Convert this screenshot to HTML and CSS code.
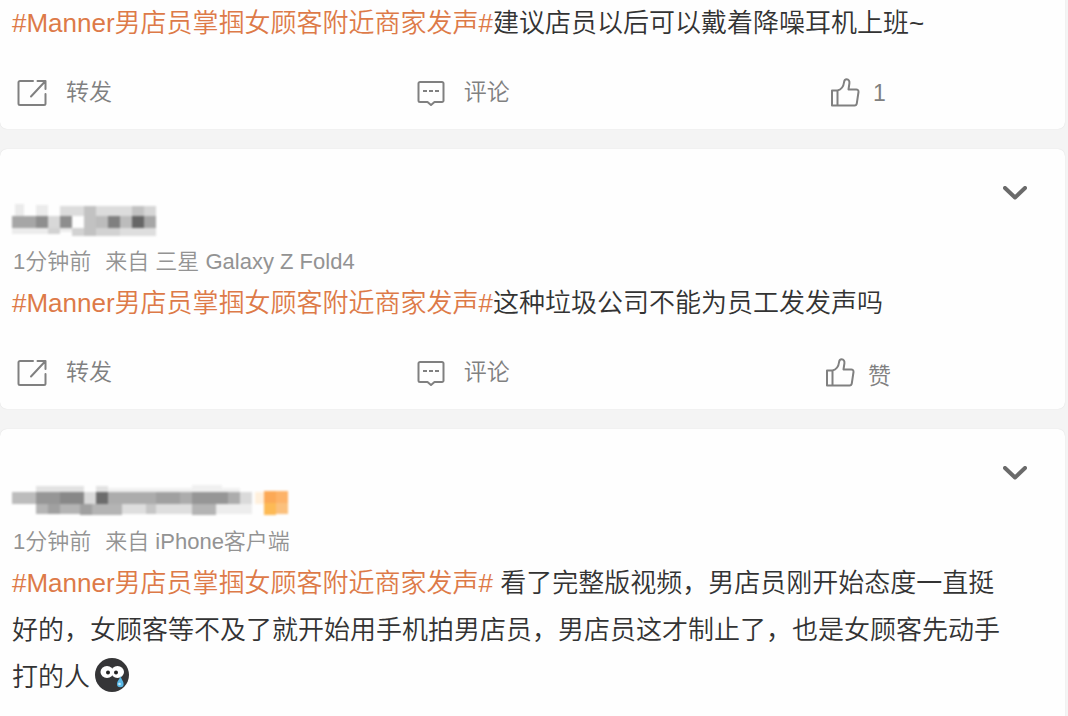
FILE: index.html
```html
<!DOCTYPE html>
<html lang="zh-CN">
<head>
    <meta charset="UTF-8">
    <meta name="viewport" content="width=device-width, initial-scale=1.0">
    <title>微博</title>
    <link rel="stylesheet" href="styles.css">
</head>
<body>
    <!-- shared icons -->
    <svg class="sprite" aria-hidden="true">
        <symbol id="icon-share" viewBox="0 0 30 28">
            <path d="M16 3H3a1.500 1.500 0 0 0-1.500 1.500v21A1.500 1.500 0 0 0 3 27h24a1.500 1.500 0 0 0 1.500-1.500V16M14 18.500 28 3.500M20.500 3h8v8"/>
        </symbol>
        <symbol id="icon-comment" viewBox="0 0 28 28">
            <path d="M3 4h22a1.500 1.500 0 0 1 1.500 1.500v17A1.500 1.500 0 0 1 25 24h-7.500L14 27l-3.500-3H3a1.500 1.500 0 0 1-1.500-1.500v-17A1.500 1.500 0 0 1 3 4z"/>
            <path stroke-linecap="butt" d="M6 13h4M12 13h4M18 13h4"/>
        </symbol>
        <symbol id="icon-like" viewBox="0 0 30 30">
            <path d="M2 13.500h5.500v15H2zM7.500 13.500c4-1 6-4 6.500-8 .2-2 1.200-3.200 2.700-3.200 2 0 3 1.700 2.700 4L18.500 12.500h7.700c1.500 0 2.500 1 2.300 2.500l-1.700 11.300c-.2 1.400-1 2.200-2.300 2.200h-17"/>
        </symbol>
        <symbol id="icon-down" viewBox="0 0 24 14">
            <path d="m2 2 10 9.500L22 2"/>
        </symbol>
    </svg>

    <main class="feed">
        <article class="card">
            <p class="text"><a class="topic" href="#">#Manner男店员掌掴女顾客附近商家发声#</a>建议店员以后可以戴着降噪耳机上班~</p>
            <div class="actions">
                <button class="action share" type="button"><svg class="icon"><use href="#icon-share"/></svg><span>转发</span></button>
                <button class="action comment" type="button"><svg class="icon"><use href="#icon-comment"/></svg><span>评论</span></button>
                <button class="action like" type="button" aria-label="赞 1"><svg class="icon"><use href="#icon-like"/></svg><span>1</span></button>
            </div>
        </article>

        <article class="card">
            <header class="head">
                <svg class="name" width="145" height="32" aria-hidden="true">
                    <path fill="#ebebeb" d="M3 0h9v12H3zM24 1h12v11H24z"/>
                    <path fill="#dcdcdc" d="M48 2h24v10H48zM84 2h24v10H84zM108 2h12v10h-12z"/>
                    <path fill="#c2c2c2" d="M72 2h12v30H72zM120 2h12v10h-12z"/>
                    <path fill="#d6d6d6" d="M132 2h12v10h-12z"/>
                    <path fill="#a6a6a6" d="M0 12h24v12H0zM132 12h12v12h-12z"/>
                    <path fill="#8e8e8e" d="M24 12h12v12H24zM48 12h12v12H48z"/>
                    <path fill="#d8d8d8" d="M36 12h12v12H36z"/>
                    <path fill="#bcbcbc" d="M84 12h12v12H84zM108 12h12v12h-12z"/>
                    <path fill="#808080" d="M96 12h12v12H96z"/>
                    <path fill="#666" d="M120 12h12v12h-12z"/>
                    <path fill="#ececec" d="M0 24h36v6H0zM48 24h12v4H48z"/>
                    <path fill="#d2d2d2" d="M36 24h12v6H36zM60 24h12v8H60zM84 24h24v8H84z"/>
                    <path fill="#dedede" d="M108 24h36v8h-36z"/>
                </svg>
                <button class="more" type="button" aria-label="更多"><svg><use href="#icon-down"/></svg></button>
            </header>
            <p class="meta"><span>1分钟前</span><span>来自 三星 Galaxy Z Fold4</span></p>
            <p class="text"><a class="topic" href="#">#Manner男店员掌掴女顾客附近商家发声#</a>这种垃圾公司不能为员工发发声吗</p>
            <div class="actions">
                <button class="action share" type="button"><svg class="icon"><use href="#icon-share"/></svg><span>转发</span></button>
                <button class="action comment" type="button"><svg class="icon"><use href="#icon-comment"/></svg><span>评论</span></button>
                <button class="action like" type="button"><svg class="icon"><use href="#icon-like"/></svg><span>赞</span></button>
            </div>
        </article>

        <article class="card">
            <header class="head">
                <svg class="name" width="280" height="32" aria-hidden="true">
                    <path fill="#e2e2e2" d="M24 2h48v6H24zM84 2h12v6H84z"/>
                    <path fill="#f0f0f0" d="M96 4h84v4H96zM180 1h30v7h-30zM210 4h18v4h-18z"/>
                    <path fill="#bcbcbc" d="M0 8h24v12H0z"/>
                    <path fill="#969696" d="M24 8h24v12H24zM180 8h36v12h-36z"/>
                    <path fill="#888" d="M48 8h24v12H48z"/>
                    <path fill="#dadada" d="M72 8h12v12H72zM228 8h12v12h-12z"/>
                    <path fill="#6c6c6c" d="M84 8h12v12H84z"/>
                    <path fill="#acacac" d="M96 8h48v12H96zM168 8h12v12h-12zM216 8h12v12h-12z"/>
                    <path fill="#a0a0a0" d="M144 8h24v12h-24z"/>
                    <path fill="#b4b4b4" d="M24 20h12v10H24zM48 20h20v10H48zM80 20h30v11H80zM180 20h24v11h-24z"/>
                    <path fill="#a0a0a0" d="M36 20h12v10H36zM68 20h12v11H68z"/>
                    <path fill="#dedede" d="M110 20h24v10h-24zM144 20h36v10h-36z"/>
                    <path fill="#c6c6c6" d="M134 20h10v10h-10z"/>
                    <path fill="#ededed" d="M204 20h36v10h-36z"/>
                    <path fill="#fff0dc" d="M243 8h9v12h-9z"/>
                    <path fill="#fca956" d="M252 7h12v12h-12z"/>
                    <path fill="#fdb368" d="M264 7h12v12h-12z"/>
                    <path fill="#fdba55" d="M252 19h12v12h-12z"/>
                    <path fill="#fbc07c" d="M264 19h12v11h-12z"/>
                </svg>
                <button class="more" type="button" aria-label="更多"><svg><use href="#icon-down"/></svg></button>
            </header>
            <p class="meta"><span>1分钟前</span><span>来自 iPhone客户端</span></p>
            <p class="text"><a class="topic" href="#">#Manner男店员掌掴女顾客附近商家发声#</a> 看了完整版视频，男店员刚开始态度一直挺好的，女顾客等不及了就开始用手机拍男店员，男店员这才制止了，也是女顾客先动手打的人<svg class="emoji" viewBox="0 0 34 34" role="img" aria-label="悲伤">
                <circle cx="17" cy="17" r="17" fill="#353537"/>
                <ellipse cx="12" cy="14" rx="6.500" ry="6" fill="#fff"/>
                <ellipse cx="22.500" cy="14" rx="6.500" ry="6" fill="#fff"/>
                <circle cx="13" cy="14.500" r="2" fill="#222"/>
                <circle cx="21" cy="14.500" r="2" fill="#222"/>
                <path d="M25.500 18c-1 3.500-3.500 5-3.500 8a3.300 3.300 0 0 0 6.600 0c0-3-2.300-4.500-3.100-8z" fill="#58b7e6"/>
                <circle cx="24.500" cy="26" r="1.300" fill="#c9ecfb"/>
            </svg></p>
        </article>
    </main>
</body>
</html>
```
FILE: styles.css
```css
body {
    margin: 0;
    background-color: #f4f4f4;
    font-family: "Liberation Sans", "Noto Sans CJK SC", sans-serif;
    font-weight: 350;
    color: #333;
}
.sprite {
    display: none;
}
.feed {
    display: flex;
    flex-direction: column;
    gap: 20px;
    margin-right: 3px;
}
.card {
    background-color: #fefefe;
    border-radius: 7px;
    box-shadow: 0 0 1px rgba(0, 0, 0, 0.15);
}
.card:first-child {
    border-top-left-radius: 0;
    border-top-right-radius: 0;
}
.card:last-child {
    padding-bottom: 40px;
}
.head {
    display: flex;
    justify-content: space-between;
    align-items: flex-start;
    padding: 31px 38px 8px 12px;
}
.name {
    margin-top: 24px;
    shape-rendering: crispEdges;
    filter: blur(1px);
}
.more {
    padding: 6px 0;
    border: none;
    background: none;
    cursor: pointer;
}
.more svg {
    display: block;
    width: 24px;
    height: 14px;
    fill: none;
    stroke: #6a6a6a;
    stroke-width: 4;
    stroke-linecap: round;
    stroke-linejoin: round;
}
.meta {
    display: flex;
    gap: 14px;
    margin: 0;
    padding: 0 13px;
    font-size: 22px;
    line-height: 36px;
    color: #939393;
}
.text {
    margin: 0;
    padding: 0 52px 0 12px;
    font-size: 26px;
    line-height: 47px;
}
.topic {
    color: #dd7a48;
    text-decoration: none;
}
.emoji {
    width: 34px;
    height: 34px;
    margin-left: 5px;
    vertical-align: -6px;
}
.actions {
    display: grid;
    grid-template-columns: 2fr 3fr 3fr;
    padding: 8px 6px 0 0;
}
.action {
    display: flex;
    align-items: center;
    justify-content: center;
    gap: 19px;
    height: 74px;
    padding: 0;
    border: none;
    background: none;
    font-family: inherit;
    font-weight: inherit;
    font-size: 23px;
    color: #808080;
    cursor: pointer;
}
.action span {
    padding-bottom: 5px;
}
.share {
    justify-content: flex-start;
    padding-left: 17px;
}
.like {
    gap: 13px;
    padding-right: 5px;
}
.like span {
    padding: 3px 0 0;
}
.icon {
    width: 30px;
    height: 28px;
    fill: none;
    stroke: #808080;
    stroke-width: 2;
    stroke-linecap: round;
    stroke-linejoin: round;
}
.comment .icon {
    width: 28px;
}
.like .icon {
    height: 30px;
}
```
